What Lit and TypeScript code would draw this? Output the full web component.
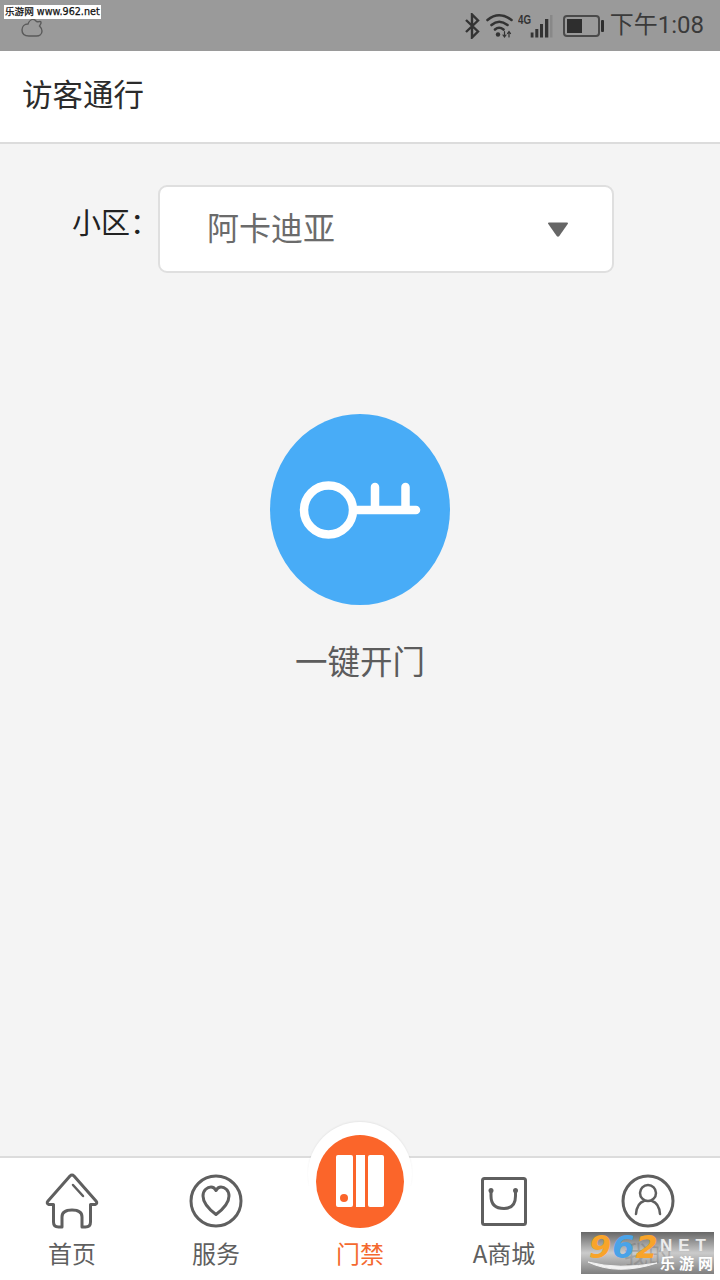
import { LitElement, html, css, svg } from 'lit';
import { customElement } from 'lit/decorators.js';

const tabIcons = {
  home: svg`<svg class="tab-icon" viewBox="40 1168 64 64" fill="none" stroke="#5f5f5f" stroke-width="3" stroke-linejoin="round" stroke-linecap="round">
    <path d="M53.5 1204.5 L49 1204.5 Q46 1203.5 48 1201 L70 1176 Q72 1174 74 1176 L96 1201 Q98 1203.5 95 1204.5 L90.5 1204.5 V1222 Q90.5 1227 85.5 1227 H82 V1217 Q82 1210 72 1210 Q62 1210 62 1217 V1227 H58.5 Q53.5 1227 53.5 1222 Z"/>
    <path d="M73 1185 L83 1196" stroke-width="2.5"/>
  </svg>`,
  service: svg`<svg class="tab-icon" viewBox="184 1168 64 64" fill="none" stroke="#5f5f5f" stroke-width="3" stroke-linejoin="round">
    <circle cx="216" cy="1201" r="25"/>
    <path d="M216 1214.5 C210 1210 203 1204 203 1196 C203 1190 207.5 1187 211 1187 C213.5 1187 215 1188.5 216 1190.5 C217 1188.5 218.5 1187 221 1187 C224.5 1187 229 1190 229 1196 C229 1204 222 1210 216 1214.5 Z"/>
  </svg>`,
  shop: svg`<svg class="tab-icon" viewBox="472 1168 64 64" fill="none" stroke="#5f5f5f" stroke-width="3" stroke-linejoin="round">
    <rect x="482.5" y="1178.5" width="43" height="46" rx="2"/>
    <path d="M491 1190 V1196 Q491 1208.5 504 1208.5 Q515.5 1208.5 515.5 1196 V1190"/>
    <circle cx="491" cy="1190.5" r="2.5" fill="#5f5f5f" stroke="none"/>
    <circle cx="515.5" cy="1190.5" r="2.5" fill="#5f5f5f" stroke="none"/>
  </svg>`,
  mine: svg`<svg class="tab-icon" viewBox="616 1168 64 64" fill="none" stroke="#5f5f5f" stroke-width="3" stroke-linecap="round">
    <circle cx="648" cy="1201" r="25"/>
    <circle cx="648" cy="1193" r="8" stroke-width="2.5"/>
    <path d="M636 1214 Q637 1203 644 1201 M660 1214 Q659 1203 652 1201" stroke-width="2.5"/>
  </svg>`,
};

@customElement('app-root')
export class AppRoot extends LitElement {
  static styles = css`
    :host {
      display: block;
      width: 720px;
      height: 1280px;
      font-family: 'Noto Sans CJK SC', 'Noto Sans', sans-serif;
      background: #f4f4f4;
      overflow: hidden;
    }

    .page {
      position: relative;
      display: flex;
      flex-direction: column;
      height: 1280px;
    }

    /* status bar */
    .status {
      height: 51px;
      flex: none;
      background: #9a9a9a;
      display: flex;
      align-items: center;
      padding: 0 16px 0 21px;
      color: #333;
    }

    .cloud {
      width: 22px;
      height: 20px;
      margin-top: 5px;
    }

    .status-right {
      margin-left: auto;
      display: flex;
      align-items: center;
    }

    .status-right svg {
      display: block;
    }

    .bt { margin-right: 6px; }
    .wifi { margin-right: 5px; }
    .signal { margin-right: 10px; }
    .battery { margin-right: 6px; }

    .clock {
      font-family: 'Roboto', 'Noto Sans CJK SC', sans-serif;
      font-size: 24px;
      line-height: 51px;
      color: #3a3a3a;
    }

    .site-mark {
      position: absolute;
      left: 4px;
      top: 5px;
      width: 96px;
      height: 14px;
      padding-left: 1px;
      background: #fff;
      color: #111;
      font: 9.6px/14px 'DejaVu Sans', 'Noto Sans CJK SC', sans-serif;
      white-space: nowrap;
      -webkit-text-stroke: 0.25px #111;
    }

    /* app bar */
    .bar {
      height: 83px;
      flex: none;
      background: #fff;
      border-bottom: 2px solid #dcdcdc;
      display: flex;
      align-items: center;
      padding: 0 0 8px 22px;
      font-size: 30.5px;
      color: #2b2b2b;
    }

    /* content */
    .main {
      flex: 1;
      display: flex;
      flex-direction: column;
      align-items: center;
    }

    .picker {
      align-self: stretch;
      display: flex;
      align-items: flex-start;
      padding: 41px 0 0 72px;
    }

    .picker-label {
      width: 86px;
      font-size: 29px;
      line-height: 72px;
      color: #222;
      white-space: nowrap;
    }

    .select {
      width: 456px;
      height: 88px;
      box-sizing: border-box;
      border: 2px solid #dfdfdf;
      border-radius: 9px;
      background: #fff;
      display: flex;
      align-items: center;
      justify-content: space-between;
      padding: 0 44px 0 47px;
      font-size: 32px;
      color: #6b6b6b;
    }

    .select span {
      margin-bottom: 6px;
    }

    .arrow {
      width: 20px;
      height: 15px;
      display: block;
    }

    .open {
      margin-top: 141px;
      display: flex;
      flex-direction: column;
      align-items: center;
    }

    .key-button {
      width: 180px;
      height: 191px;
      border-radius: 50%;
      background: #48acf7;
    }

    .key-button svg {
      display: block;
      width: 180px;
      height: 191px;
    }

    .open-label {
      margin-top: 31px;
      font-size: 32.5px;
      line-height: 48px;
      color: #5c5c5c;
    }

    /* bottom nav */
    .nav {
      position: relative;
      height: 122px;
      flex: none;
      background: #fff;
      border-top: 2px solid #dcdcdc;
      display: grid;
      grid-template-columns: repeat(5, 144px);
    }

    .tab {
      display: flex;
      flex-direction: column;
      align-items: center;
      font-size: 24px;
      line-height: 36px;
      color: #5f5f5f;
      padding-top: 10px;
    }

    .tab-icon {
      width: 64px;
      height: 64px;
      display: block;
      margin-bottom: 2px;
    }

    .tab-label {
      margin-top: 1px;
      white-space: nowrap;
    }

    .tab--active {
      color: #f4692f;
    }

    .tab--active .tab-spacer {
      height: 64px;
      margin-bottom: 2px;
    }

    .raised {
      position: absolute;
      left: 308px;
      top: -36px;
      width: 104px;
      height: 104px;
      border-radius: 50%;
      background: #fff;
      box-shadow: 0 -1px 2px rgba(0, 0, 0, 0.06);
      clip-path: inset(-4px -4px 40px -4px);
    }

    .door {
      position: absolute;
      left: 316px;
      top: -23px;
      width: 88px;
      height: 93px;
    }

    .door svg {
      display: block;
      width: 88px;
      height: 93px;
    }

    /* watermark lying over the last tab */
    .watermark {
      position: absolute;
      left: 581px;
      top: 1232px;
      width: 133px;
      height: 42px;
      background: linear-gradient(rgba(95, 95, 95, 0.95), rgba(190, 190, 190, 0.8) 50%, rgba(120, 120, 120, 0.95));
      display: grid;
      grid-template-columns: 79px 54px;
    }

    .wm-num {
      font: italic 700 32px/30px 'DejaVu Sans', sans-serif;
      letter-spacing: 1px;
      padding-left: 8px;
      white-space: nowrap;
      height: 30px;
    }

    .wm-num b:nth-child(1) { color: #f8a42a; }
    .wm-num b:nth-child(2) { color: #4aa3e8; }
    .wm-num b:nth-child(3) { color: #f8a42a; }

    .swoosh {
      position: absolute;
      left: 6px;
      top: 28px;
      width: 72px;
      height: 12px;
    }

    .wm-side {
      display: flex;
      flex-direction: column;
      color: #fff;
    }

    .wm-net {
      font: 700 17px/17px 'Liberation Sans', sans-serif;
      letter-spacing: 6px;
      margin-top: 5px;
      color: #ececec;
      white-space: nowrap;
    }

    .wm-cn {
      font: 700 15px/18px 'Noto Sans CJK SC', sans-serif;
      letter-spacing: 4px;
      white-space: nowrap;
    }
  `;

  render() {
    return html`
      <div class="page">
        <div class="status">
          <svg class="cloud" viewBox="0 0 22 20" fill="none" stroke="#5a5a5a" stroke-width="1.4">
            <path d="M8 18 C3.5 18 1 15.5 1 12 C1 8.5 3.5 6 7 6 C8 3 10.5 1 13 1.5 C14.5 2 15 3.5 16.5 3.8 C18 3.8 19.5 3 20 4 C20.5 5.5 19 7 18.5 8 C20 9.5 21 11 21 13 C21 16 18.5 18 15.5 18 Z"/>
          </svg>
          <div class="status-right">
            <svg class="bt" width="15" height="26" viewBox="0 0 15 26" fill="none" stroke="#333" stroke-width="2.4">
              <path d="M1 7 L13 18.5 L7 24.5 V1.5 L13 7.5 L1 19"/>
            </svg>
            <svg class="wifi" width="27" height="26" viewBox="0 0 27 26" fill="none" stroke="#333" stroke-width="2.6" stroke-linecap="round">
              <path d="M1.5 7 Q13 -2.5 25.5 7 M5.5 12 Q13 5.5 21.5 12 M9 16.5 Q13 13 17.5 16.5"/>
              <circle cx="12" cy="21.5" r="2.2" fill="#333" stroke="none"/>
              <path d="M18.5 18.5 V24 M17 22 L18.5 24 L20 22 M23 24 V18.5 M21.5 20.5 L23 18.5 L24.5 20.5" stroke-width="1.2"/>
            </svg>
            <svg class="signal" width="35" height="28" viewBox="0 0 35 28">
              <text x="0" y="12" font-size="12.5" font-weight="700" fill="#333" font-family="Liberation Sans, sans-serif" textLength="13" lengthAdjust="spacingAndGlyphs">4G</text>
              <rect x="12.7" y="20.5" width="2.8" height="5" fill="#333"/>
              <rect x="17.3" y="17" width="3" height="8.5" fill="#333"/>
              <rect x="22" y="12" width="3" height="13.5" fill="#333"/>
              <rect x="27" y="7" width="3.3" height="18.5" fill="#333"/>
              <rect x="32" y="3" width="2.5" height="22.5" fill="#888"/>
            </svg>
            <svg class="battery" width="41" height="22" viewBox="0 0 41 22">
              <rect x="1" y="1" width="35" height="20" rx="3" fill="none" stroke="#4a4a4a" stroke-width="2"/>
              <rect x="4" y="4" width="15" height="14" fill="#2e2e2e"/>
              <rect x="38" y="5" width="3" height="12" rx="1" fill="#2e2e2e"/>
            </svg>
            <span class="clock">下午1:08</span>
          </div>
        </div>
        <div class="site-mark">乐游网 www.962.net</div>

        <div class="bar">访客通行</div>

        <div class="main">
          <div class="picker">
            <div class="picker-label">小区：</div>
            <div class="select">
              <span>阿卡迪亚</span>
              <svg class="arrow" viewBox="0 0 20 15"><path d="M1 0.5 H19 Q20.5 0.5 19.7 2 L11.3 14 Q10 15.5 8.7 14 L0.3 2 Q-0.5 0.5 1 0.5 Z" fill="#666"/></svg>
            </div>
          </div>

          <div class="open">
            <div class="key-button">
              <svg viewBox="270 414 180 191" fill="none" stroke="#fff" stroke-width="8.5" stroke-linecap="round">
                <circle cx="328.5" cy="510" r="24.5"/>
                <path d="M354 510 H416 M375 487 V510 M405.5 487 V510"/>
              </svg>
            </div>
            <div class="open-label">一键开门</div>
          </div>
        </div>

        <div class="nav">
          <div class="raised"></div>
          <div class="tab">${tabIcons.home}<span class="tab-label">首页</span></div>
          <div class="tab">${tabIcons.service}<span class="tab-label">服务</span></div>
          <div class="tab tab--active"><div class="tab-spacer"></div><span class="tab-label">门禁</span></div>
          <div class="tab">${tabIcons.shop}<span class="tab-label">A商城</span></div>
          <div class="tab">${tabIcons.mine}<span class="tab-label">我的</span></div>
          <div class="door">
            <svg viewBox="316 1135 88 93">
              <ellipse cx="360" cy="1181.5" rx="44" ry="46.5" fill="#fb652a"/>
              <rect x="336" y="1155" width="17" height="52" rx="2" fill="#fff"/>
              <rect x="356" y="1155" width="9" height="52" fill="#fff"/>
              <rect x="368" y="1155" width="16" height="52" rx="2" fill="#fff"/>
              <circle cx="344" cy="1198" r="4" fill="#fb652a"/>
            </svg>
          </div>
        </div>

        <div class="watermark">
          <div class="wm-num"><b>9</b><b>6</b><b>2</b></div>
          <svg class="swoosh" viewBox="0 0 72 12" fill="none"><path d="M1 2 Q30 16 70 3 Q32 10 1 2 Z" fill="#f2f2f2" stroke="#f2f2f2" stroke-width="1"/></svg>
          <div class="wm-side">
            <span class="wm-net">NET</span>
            <span class="wm-cn">乐游网</span>
          </div>
        </div>
      </div>
    `;
  }
}

declare global {
  interface HTMLElementTagNameMap {
    'app-root': AppRoot;
  }
}
